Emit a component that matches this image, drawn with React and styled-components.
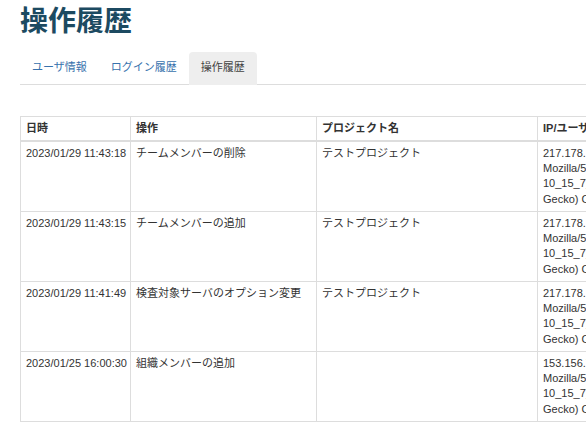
import React from "react";
import styled, { createGlobalStyle } from "styled-components";

const Global = createGlobalStyle`
  html, body { margin: 0; padding: 0; background: #fff; overflow: hidden; }
  body { font-family: "Liberation Sans", "Noto Sans CJK JP", sans-serif; color: #333; }
`;

const Page = styled.div`
  padding: 6px 0 0 20px;
  width: 900px;
`;

const Title = styled.h1`
  margin: 0;
  font-size: 28px;
  line-height: 31px;
  font-weight: 700;
  color: #1c4a61;
`;

const Tabs = styled.ul`
  display: flex;
  list-style: none;
  margin: 15px 0 0 0;
  padding: 0;
  border-bottom: 1px solid #dddddd;
`;

const Tab = styled.li`
  padding: 8px 12px;
  font-size: 11px;
  line-height: 15.7px;
  border-radius: 4px 4px 0 0;
  margin-bottom: -1px;
  border-bottom: 1px solid ${(p) => (p.$active ? "#eeeeee" : "transparent")};
  background: ${(p) => (p.$active ? "#eeeeee" : "transparent")};
  color: ${(p) => (p.$active ? "#444" : "#3872ad")};
`;

const Table = styled.table`
  margin-top: 31px;
  border-collapse: collapse;
  table-layout: fixed;
  width: 790px;
  font-size: 11px;
  line-height: 15.25px;
`;

const Th = styled.th`
  text-align: left;
  font-weight: 700;
  padding: 4px 5px;
  border: 1px solid #dddddd;
  border-bottom-width: 2px;
  color: #333;
`;

const Td = styled.td`
  vertical-align: top;
  padding: 4px 5px;
  border: 1px solid #dddddd;
  color: #333;
  white-space: nowrap;
  overflow: hidden;
`;

const Line = styled.div`
  white-space: nowrap;
`;

const rows = [
  { date: "2023/01/29 11:43:18", op: "チームメンバーの削除", proj: "テストプロジェクト", ip: "217.178.113.204" },
  { date: "2023/01/29 11:43:15", op: "チームメンバーの追加", proj: "テストプロジェクト", ip: "217.178.113.204" },
  { date: "2023/01/29 11:41:49", op: "検査対象サーバのオプション変更", proj: "テストプロジェクト", ip: "217.178.113.204" },
  { date: "2023/01/25 16:00:30", op: "組織メンバーの追加", proj: "", ip: "153.156.72.18" },
];

export default function App() {
  return (
    <>
      <Global />
      <Page>
        <Title>操作履歴</Title>
        <Tabs>
          <Tab>ユーザ情報</Tab>
          <Tab>ログイン履歴</Tab>
          <Tab $active>操作履歴</Tab>
        </Tabs>
        <Table>
          <colgroup>
            <col style={{ width: 110 }} />
            <col style={{ width: 186 }} />
            <col style={{ width: 221 }} />
            <col style={{ width: 273 }} />
          </colgroup>
          <thead>
            <tr>
              <Th>日時</Th>
              <Th>操作</Th>
              <Th>プロジェクト名</Th>
              <Th>IP/ユーザーエージェント</Th>
            </tr>
          </thead>
          <tbody>
            {rows.map((r, i) => (
              <tr key={i}>
                <Td>{r.date}</Td>
                <Td>{r.op}</Td>
                <Td>{r.proj}</Td>
                <Td>
                  <Line>{r.ip}</Line>
                  <Line>Mozilla/5.0 (Macintosh; Intel Mac OS X</Line>
                  <Line>10_15_7) AppleWebKit/537.36 (KHTML, like</Line>
                  <Line>Gecko) Chrome/109.0.0.0 Safari/537.36</Line>
                </Td>
              </tr>
            ))}
          </tbody>
        </Table>
      </Page>
    </>
  );
}
